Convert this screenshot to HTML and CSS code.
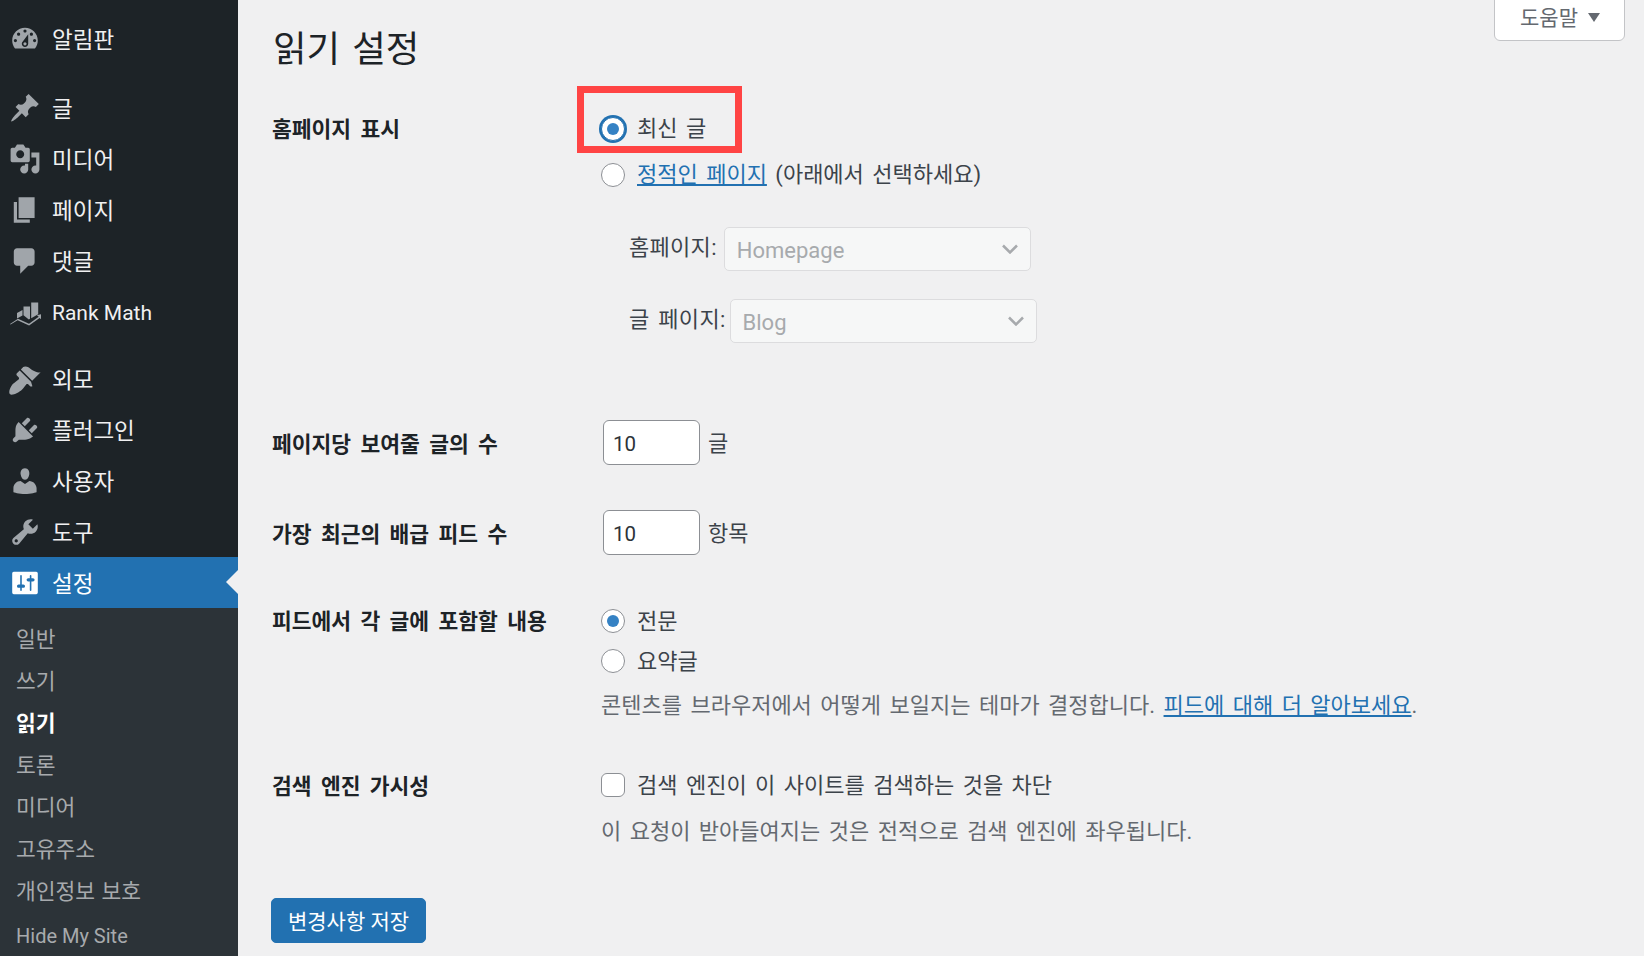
FILE: index.html
```html
<!DOCTYPE html>
<html lang="ko">
<head>
<meta charset="utf-8">
<title>읽기 설정</title>
<link rel="stylesheet" href="styles.css">
</head>
<body>
<div class="app">
  <nav class="sidebar">
    <ul class="menu menu-first">
      <li class="item"><svg class="icon" viewBox="0 0 20 20"><path fill-rule="evenodd" d="M3.76 16h12.48c1.1-1.37 1.76-3.11 1.76-5 0-4.42-3.58-8-8-8s-8 3.58-8 8c0 1.89.66 3.63 1.76 5zM10 4c.55 0 1 .45 1 1s-.45 1-1 1-1-.45-1-1 .45-1 1-1zM6 6c.55 0 1 .45 1 1s-.45 1-1 1-1-.45-1-1 .45-1 1-1zm8 0c.55 0 1 .45 1 1s-.45 1-1 1-1-.45-1-1 .45-1 1-1zm-5.37 5.55L12 7v6c0 1.1-.9 2-2 2s-2-.9-2-2c0-.57.24-1.08.63-1.45zM4 10c.55 0 1 .45 1 1s-.45 1-1 1-1-.45-1-1 .45-1 1-1zm12 0c.55 0 1 .45 1 1s-.45 1-1 1-1-.45-1-1 .45-1 1-1zm-5 3c0-.55-.45-1-1-1s-1 .45-1 1 .45 1 1 1 1-.45 1-1z"/></svg><span>알림판</span></li>
    </ul>
    <ul class="menu menu-second">
      <li class="item"><svg class="icon" viewBox="0 0 20 20"><path d="M10.44 3.02l1.82-1.82 6.36 6.35-1.83 1.82c-1.05-.68-2.48-.57-3.41.36l-.75.75c-.92.93-1.04 2.35-.35 3.41l-1.83 1.82-2.41-2.41-2.8 2.79c-.42.42-3.38 2.71-3.8 2.29s1.86-3.39 2.28-3.81l2.79-2.79L4.1 9.36l1.83-1.82c1.05.69 2.48.57 3.4-.36l.75-.75c.93-.92 1.05-2.35.36-3.41z"/></svg><span>글</span></li>
      <li class="item"><svg class="icon" viewBox="0 0 20 20"><path fill-rule="evenodd" d="M13 11V4c0-.55-.45-1-1-1h-1.67L9 1H5L3.67 3H2c-.55 0-1 .45-1 1v7c0 .55.45 1 1 1h10c.55 0 1-.45 1-1zM7 4.5c1.38 0 2.5 1.12 2.5 2.5S8.38 9.5 7 9.5 4.5 8.38 4.5 7 5.62 4.5 7 4.5zM14 6h5v10.5c0 1.38-1.12 2.5-2.5 2.5S14 17.88 14 16.5s1.12-2.5 2.5-2.5c.17 0 .34.02.5.05V9h-3V6zm-4 8.05V13h2v3.5c0 1.38-1.12 2.5-2.5 2.5S7 17.88 7 16.5 8.12 14 9.5 14c.17 0 .34.02.5.05z"/></svg><span>미디어</span></li>
      <li class="item"><svg class="icon" viewBox="0 0 20 20"><path d="M6 15V2h10v13H6zm-1 1h8v2H3V5h2v11z"/></svg><span>페이지</span></li>
      <li class="item"><svg class="icon" viewBox="0 0 20 20"><path d="M5 2h9c1.1 0 2 .9 2 2v7c0 1.1-.9 2-2 2h-2l-5 5v-5H5c-1.1 0-2-.9-2-2V4c0-1.1.9-2 2-2z"/></svg><span>댓글</span></li>
      <li class="item"><svg class="icon" viewBox="0 0 32 32"><path d="M8 22.500l0-5.500 5.500-3v5.500z"/><path d="M14.500 19.200V10.500h6.500v12.300l-1.200.7z"/><path d="M22.200 22.200V6.500h7v11.800z"/><path d="M1 28l8-5.200 11 5 9.700-7-1.800-1.500 5.500-1.500-1.300 5.500-1.500-1.400-10.500 7.600-11.500-5.300-7 4.300z"/></svg><span class="latin">Rank Math</span></li>
    </ul>
    <ul class="menu menu-third">
      <li class="item"><svg class="icon" viewBox="0 0 20 20"><path d="M14.48 11.06L7.41 3.99l1.5-1.5c.5-.56 2.3-.47 3.51.32 1.21.8 1.43 1.28 2.91 2.1 1.18.64 2.45 1.26 4.45.85zm-.71.71L6.7 4.7 4.93 6.47c-.39.39-.39 1.02 0 1.41l1.06 1.06c.39.39.39 1.03 0 1.42-.6.6-1.430 1.110-2.210 1.690-.35.26-.7.53-1.010.84C1.430 13.710-.7 18.220.53 19.450s5.770-.9 7.680-2.820c.3-.31.57-.65.84-1.010.57-.78 1.090-1.610 1.690-2.210.39-.39 1.020-.39 1.410 0l1.060 1.060c.39.39 1.020.39 1.410 0z"/></svg><span>외모</span></li>
      <li class="item"><svg class="icon" viewBox="0 0 20 20"><path d="M13.11 4.36L9.87 7.6 8 5.730l3.240-3.240c.35-.34 1.050-.2 1.560.32.52.51.66 1.210.31 1.550zm-8 1.770l.91-1.120 9.010 9.010-1.190.84c-.71.71-2.630 1.160-3.820 1.160H6.140L4.900 17.260c-.59.59-1.540.59-2.120 0-.59-.58-.59-1.530 0-2.120l1.240-1.240v-3.880c0-1.130.4-3.190 1.090-3.890zm7.260 3.970l3.240-3.240c.34-.35 1.040-.21 1.550.31.52.51.66 1.210.31 1.550l-3.240 3.250z"/></svg><span>플러그인</span></li>
      <li class="item"><svg class="icon" viewBox="0 0 20 20"><path d="M10 9.250c-2.270 0-2.730-3.440-2.730-3.440C7 4.020 7.820 2 9.970 2c2.160 0 2.980 2.020 2.710 3.810 0 0-.41 3.440-2.680 3.440zm0 2.570L12.720 10c2.390 0 4.520 2.330 4.520 4.530v2.490s-3.650 1.130-7.240 1.130c-3.650 0-7.240-1.130-7.240-1.130v-2.490c0-2.250 1.940-4.480 4.470-4.480z"/></svg><span>사용자</span></li>
      <li class="item"><svg class="icon" viewBox="0 0 20 20"><path fill-rule="evenodd" d="M16.680 9.770c-1.340 1.340-3.300 1.670-4.950.99l-5.410 6.520c-.99.99-2.590.99-3.580 0s-.99-2.590 0-3.570l6.520-5.420c-.68-1.650-.35-3.610.99-4.950 1.280-1.280 3.120-1.620 4.720-1.060l-2.890 2.890 2.820 2.820 2.860-2.870c.53 1.580.18 3.390-1.080 4.650zM3.810 16.210c.4.39 1.040.39 1.430 0 .4-.4.4-1.040 0-1.430-.39-.4-1.030-.4-1.430 0-.39.39-.39 1.030 0 1.430z"/></svg><span>도구</span></li>
      <li class="item item-active"><svg class="icon" viewBox="0 0 20 20"><path fill-rule="evenodd" d="M18 16V4c0-.55-.45-1-1-1H3c-.55 0-1 .45-1 1v12c0 .55.45 1 1 1h14c.55 0 1-.45 1-1zM8 11h1c.55 0 1 .45 1 1s-.45 1-1 1H8v1.500c0 .28-.22.5-.5.5s-.5-.22-.5-.5V13H6c-.55 0-1-.45-1-1s.45-1 1-1h1V5.500c0-.28.22-.5.5-.5s.5.22.5.5V11zm5-2h-1c-.55 0-1-.45-1-1s.45-1 1-1h1V5.500c0-.28.22-.5.5-.5s.5.22.5.5V7h1c.55 0 1 .45 1 1s-.45 1-1 1h-1v5.500c0 .28-.22.5-.5.5s-.5-.22-.5-.5V9z"/></svg><span>설정</span></li>
    </ul>
    <ul class="submenu">
      <li>일반</li>
      <li>쓰기</li>
      <li class="sub-current">읽기</li>
      <li>토론</li>
      <li>미디어</li>
      <li>고유주소</li>
      <li>개인정보 보호</li>
      <li class="sub-latin">Hide My Site</li>
    </ul>
  </nav>

  <main class="content">
    <div class="help"><span class="help-text">도움말</span><span class="help-arrow"></span></div>
    <div class="highlight"></div>
    <h1 class="title">읽기 설정</h1>
    <form class="form">
      <div class="row row-front">
        <div class="row-label">홈페이지 표시</div>
        <div class="row-body">
          <label class="option option-raised"><input class="radio radio-focus" type="radio" name="front" checked><span>최신 글</span></label>
          <label class="option option-raised option-second"><input class="radio" type="radio" name="front"><span><a class="link" href="#">정적인 페이지</a> (아래에서 선택하세요)</span></label>
          <div class="pages">
            <div class="page-line"><span>홈페이지:</span><select class="select" disabled><option>Homepage</option></select></div>
            <div class="page-line page-line-second"><span>글 페이지:</span><select class="select" disabled><option>Blog</option></select></div>
          </div>
        </div>
      </div>
      <div class="row row-count">
        <div class="row-label">페이지당 보여줄 글의 수</div>
        <div class="row-body inline"><input class="number" type="text" value="10"><span>글</span></div>
      </div>
      <div class="row row-feed">
        <div class="row-label">가장 최근의 배급 피드 수</div>
        <div class="row-body inline"><input class="number" type="text" value="10"><span>항목</span></div>
      </div>
      <div class="row row-content">
        <div class="row-label">피드에서 각 글에 포함할 내용</div>
        <div class="row-body">
          <label class="option option-lift"><input class="radio" type="radio" name="feed" checked><span>전문</span></label>
          <label class="option option-lift"><input class="radio" type="radio" name="feed"><span>요약글</span></label>
          <p class="desc desc-feed">콘텐츠를 브라우저에서 어떻게 보일지는 테마가 결정합니다. <a class="link" href="#">피드에 대해 더 알아보세요</a>.</p>
        </div>
      </div>
      <div class="row row-search">
        <div class="row-label">검색 엔진 가시성</div>
        <div class="row-body">
          <label class="option option-lift"><input class="check" type="checkbox"><span>검색 엔진이 이 사이트를 검색하는 것을 차단</span></label>
          <p class="desc desc-search">이 요청이 받아들여지는 것은 전적으로 검색 엔진에 좌우됩니다.</p>
        </div>
      </div>
      <button class="save" type="button">변경사항 저장</button>
    </form>
  </main>
</div>
</body>
</html>
```

FILE: styles.css
```css
* { box-sizing: border-box; }
html, body { margin: 0; padding: 0; }
body {
  background: #f0f0f1;
  color: #3c434a;
  font-family: Roboto, "Noto Sans CJK KR", sans-serif;
  font-size: 22px;
  word-spacing: 3px;
  overflow: hidden;
}
ul { list-style: none; margin: 0; padding: 0; }
p { margin: 0; }

.app { display: flex; height: 956px; overflow: hidden; }

.sidebar { width: 238px; flex: none; background: #1d2327; color: #f0f0f1; }
.menu-first { padding-top: 13px; }
.menu-second { margin-top: 18px; }
.menu-third { margin-top: 16px; }
.item {
  position: relative;
  display: flex;
  align-items: center;
  gap: 11px;
  height: 51px;
  padding-left: 9px;
  font-size: 22.5px;
}
.item span { padding-bottom: 2px; }
.icon { width: 32px; height: 32px; fill: #a0a5aa; flex: none; }
.item .latin { font-size: 21px; word-spacing: 0; padding: 2px 0 0; }
.item-active { background: #2271b1; color: #fff; }
.item-active .icon { fill: #fff; }
.item-active::after {
  content: "";
  position: absolute;
  right: 0;
  top: 13px;
  border: 12.500px solid transparent;
  border-right-color: #f0f0f1;
  border-left-width: 0;
  border-right-width: 12px;
}

.submenu { background: #2c3338; height: 348px; padding-top: 11px; color: #a7aaad; word-spacing: 1px; }
.submenu li { height: 42px; line-height: 42px; padding-left: 16px; font-size: 21.5px; }
.submenu .sub-current { color: #fff; font-weight: 700; }
.submenu .sub-latin { margin-top: 2px; font-size: 20px; word-spacing: 0; }

.content { position: relative; flex: 1; padding-left: 33px; }
.help {
  position: absolute;
  top: -1px;
  right: 19px;
  display: flex;
  align-items: center;
  justify-content: center;
  gap: 10px;
  width: 131px;
  height: 42px;
  padding-left: 1px;
  background: #fff;
  border: 1px solid #c3c4c7;
  border-radius: 0 0 6px 6px;
  color: #646970;
  font-size: 21px;
}
.help-text { padding-bottom: 9px; }
.help-arrow {
  width: 0;
  height: 0;
  margin-bottom: 5px;
  border-left: 6px solid transparent;
  border-right: 6px solid transparent;
  border-top: 9px solid #646970;
}
.highlight {
  position: absolute;
  left: 339px;
  top: 86px;
  width: 165px;
  height: 67px;
  border: 7px solid #ff4444;
}
.title {
  margin: 0;
  padding: 27px 0 0 2px;
  height: 109px;
  font-size: 36.5px;
  line-height: 46px;
  font-weight: 400;
  color: #1d2327;
}

.row { display: flex; }
.row-label {
  width: 330px;
  flex: none;
  height: 40px;
  padding-left: 1px;
  line-height: 44px;
  font-size: 21.500px;
  font-weight: 700;
  color: #1d2327;
  word-spacing: 4px;
}
.row-front .row-label { line-height: 42px; }
.row-content .row-label { line-height: 42px; }
.row-body { flex: 1; }
.option { display: flex; align-items: center; height: 40px; }
.option-raised span:last-child { padding-bottom: 6px; }
.option-lift span:last-child { padding-bottom: 5px; }
.option-second { margin-top: 6px; }
.radio, .check {
  appearance: none;
  margin: 0 12px 0 0;
  width: 24px;
  height: 24px;
  flex: none;
  background: #fff;
  border: 1px solid #8c8f94;
}
.radio { border-radius: 50%; position: relative; }
.radio:checked::before {
  content: "";
  position: absolute;
  left: 5px;
  top: 5px;
  width: 12px;
  height: 12px;
  border-radius: 50%;
  background: #3582c4;
}
.radio-focus { border-color: #2271b1; box-shadow: 0 0 0 2px #2271b1; }
.check { border-radius: 6px; }
.link { color: #2271b1; text-decoration: underline; }

.pages { margin-top: 32px; padding-left: 28px; }
.page-line { display: flex; align-items: center; gap: 7px; height: 44px; }
.page-line > span { padding-bottom: 8px; letter-spacing: .3px; }
.page-line-second { margin-top: 28px; gap: 4px; }
.select {
  appearance: none;
  width: 307px;
  height: 44px;
  padding: 2px 12px 0;
  font: inherit;
  font-size: 22px;
  color: #a7aaad;
  background: #f6f7f7 url("data:image/svg+xml,%3Csvg xmlns='http://www.w3.org/2000/svg' width='16' height='10' viewBox='0 0 16 10'%3E%3Cpath d='M1 1.500l7 7 7-7' fill='none' stroke='%23a7aaad' stroke-width='2.500'/%3E%3C/svg%3E") no-repeat right 12px center;
  border: 1px solid #dcdcde;
  border-radius: 5px;
  opacity: 1;
}

.row-count { margin-top: 77px; }
.row-feed { margin-top: 45px; }
.row-content { margin-top: 46px; }
.row-search { margin-top: 39px; }
.inline { display: flex; align-items: center; height: 45px; gap: 8px; padding-left: 2px; }
.inline > span { padding-bottom: 3px; }
.row-count .row-label, .row-feed .row-label { line-height: 50px; height: 45px; }
.number {
  width: 97px;
  height: 45px;
  padding: 3px 9px 0;
  font: inherit;
  font-size: 20.500px;
  color: #2c3338;
  background: #fff;
  border: 1px solid #8c8f94;
  border-radius: 6px;
}
.desc { height: 40px; line-height: 40px; color: #646970; white-space: nowrap; }
.desc-feed { margin-top: 5px; }
.desc-search { margin-top: 7px; }

.save {
  display: block;
  width: 155px;
  height: 45px;
  margin-top: 46px;
  padding: 0 0 2px;
  font: inherit;
  font-size: 21px;
  color: #fff;
  background: #2271b1;
  border: 1px solid #2271b1;
  border-radius: 5px;
}
```
